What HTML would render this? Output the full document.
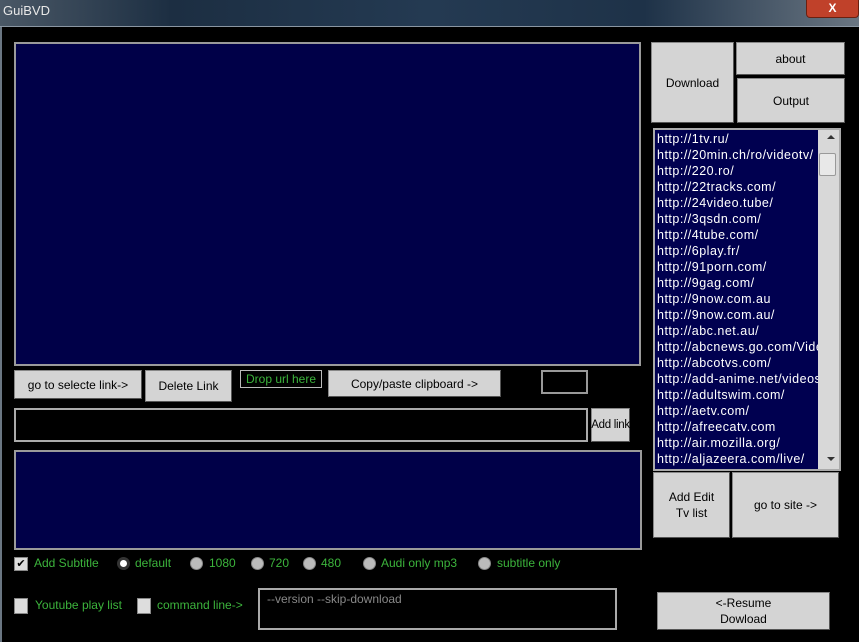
<!DOCTYPE html><html><head><style>
body{margin:0;width:859px;height:642px;background:#000;position:relative;overflow:hidden;font-family:"Liberation Sans",sans-serif;font-size:12px}
.a{position:absolute;box-sizing:border-box}
.btn{background:#d4d4d4;border:1px solid #888;border-right-color:#555;border-bottom-color:#555;color:#000;display:flex;align-items:center;justify-content:center;text-align:center;line-height:16px}
.navy{background:#000048;border:2px solid #9a9a9a}
.g{color:#3cb43c}
.rad{width:13px;height:13px;border-radius:50%;background:#bbb;border:1px solid #888}
.chk{width:14px;height:14px;background:#ddd;border:1px solid #888}
</style></head><body>
<div class="a" style="left:0;top:0;width:859px;height:27px;background:linear-gradient(90deg,#4a5866,#1c2e42 20%,#243a52 50%,#1e3248 75%,#6a7682)"></div>
<div class="a" style="left:3px;top:3px;color:#e8e8e8;font-size:13px">GuiBVD</div>
<div class="a" style="left:806px;top:0;width:53px;height:18px;background:#c0412a;border:1px solid #6a2010;border-top:none;border-radius:0 0 4px 4px;color:#fff;font-weight:bold;text-align:center;line-height:16px">X</div>
<div class="a" style="left:0;top:26px;width:859px;height:1px;background:#8a96a2"></div>
<div class="a" style="left:0;top:27px;width:2px;height:615px;background:#6a7682"></div>

<div class="a navy" style="left:14px;top:42px;width:627px;height:324px"></div>
<div class="a btn" style="left:14px;top:370px;width:128px;height:29px">go to selecte link-&gt;</div>
<div class="a btn" style="left:145px;top:370px;width:87px;height:32px">Delete Link</div>
<div class="a g" style="left:240px;top:370px;width:82px;height:18px;border:1px solid #bbb;text-align:center;line-height:16px">Drop url here</div>
<div class="a btn" style="left:328px;top:370px;width:173px;height:27px">Copy/paste clipboard -&gt;</div>
<div class="a" style="left:541px;top:370px;width:47px;height:24px;border:2px solid #999"></div>
<div class="a" style="left:14px;top:408px;width:574px;height:34px;border:2px solid #aaa"></div>
<div class="a btn" style="left:591px;top:408px;width:39px;height:34px;white-space:nowrap;font-size:11.5px;letter-spacing:-0.3px">Add link</div>
<div class="a navy" style="left:14px;top:450px;width:628px;height:100px"></div>

<div class="a chk" style="left:14px;top:557px;font-size:11px;line-height:12px;text-align:center">✔</div>
<div class="a g" style="left:34px;top:556px">Add Subtitle</div>
<div class="a rad" style="left:117px;top:557px;background:#fff;border:3px solid #333"></div>
<div class="a g" style="left:135px;top:556px">default</div>
<div class="a rad" style="left:190px;top:557px"></div><div class="a g" style="left:209px;top:556px">1080</div>
<div class="a rad" style="left:251px;top:557px"></div><div class="a g" style="left:269px;top:556px">720</div>
<div class="a rad" style="left:303px;top:557px"></div><div class="a g" style="left:321px;top:556px">480</div>
<div class="a rad" style="left:363px;top:557px"></div><div class="a g" style="left:381px;top:556px">Audi only mp3</div>
<div class="a rad" style="left:478px;top:557px"></div><div class="a g" style="left:497px;top:556px">subtitle only</div>

<div class="a chk" style="left:14px;top:598px;height:16px"></div>
<div class="a g" style="left:35px;top:598px">Youtube play list</div>
<div class="a chk" style="left:137px;top:598px;height:16px"></div>
<div class="a g" style="left:157px;top:598px">command line-&gt;</div>
<div class="a" style="left:258px;top:588px;width:359px;height:42px;border:2px solid #aaa;color:#888;padding:2px 0 0 7px">--version --skip-download</div>

<div class="a btn" style="left:651px;top:42px;width:83px;height:81px">Download</div>
<div class="a btn" style="left:736px;top:42px;width:109px;height:33px">about</div>
<div class="a btn" style="left:737px;top:78px;width:108px;height:45px">Output</div>
<div class="a" style="left:653px;top:128px;width:188px;height:343px;border:2px solid #aaa;background:#000050;overflow:hidden">
<div style="position:absolute;left:2px;top:1px;color:#fff;font-size:12.5px;letter-spacing:0.5px;line-height:16px;white-space:nowrap">http://1tv.ru/<br>http://20min.ch/ro/videotv/<br>http://220.ro/<br>http://22tracks.com/<br>http://24video.tube/<br>http://3qsdn.com/<br>http://4tube.com/<br>http://6play.fr/<br>http://91porn.com/<br>http://9gag.com/<br>http://9now.com.au<br>http://9now.com.au/<br>http://abc.net.au/<br>http://abcnews.go.com/Video<br>http://abcotvs.com/<br>http://add-anime.net/videos<br>http://adultswim.com/<br>http://aetv.com/<br>http://afreecatv.com<br>http://air.mozilla.org/<br>http://aljazeera.com/live/<br>http://alpha</div>
<div style="position:absolute;right:0;top:0;width:21px;height:339px;background:#d8d8d8"></div>
<div style="position:absolute;right:4px;top:5px;width:0;height:0;border:4px solid transparent;border-bottom-color:#333;border-top:none"></div>
<div style="position:absolute;right:3px;top:23px;width:15px;height:21px;background:#e8e8e8;border:1px solid #999;border-radius:2px"></div>
<div style="position:absolute;right:4px;bottom:8px;width:0;height:0;border:4px solid transparent;border-top-color:#333;border-bottom:none"></div>
</div>
<div class="a btn" style="left:653px;top:472px;width:77px;height:66px">Add Edit<br>Tv list</div>
<div class="a btn" style="left:732px;top:472px;width:107px;height:66px">go to site -&gt;</div>
<div class="a btn" style="left:657px;top:592px;width:173px;height:38px">&lt;-Resume<br>Dowload</div>
</body></html>
